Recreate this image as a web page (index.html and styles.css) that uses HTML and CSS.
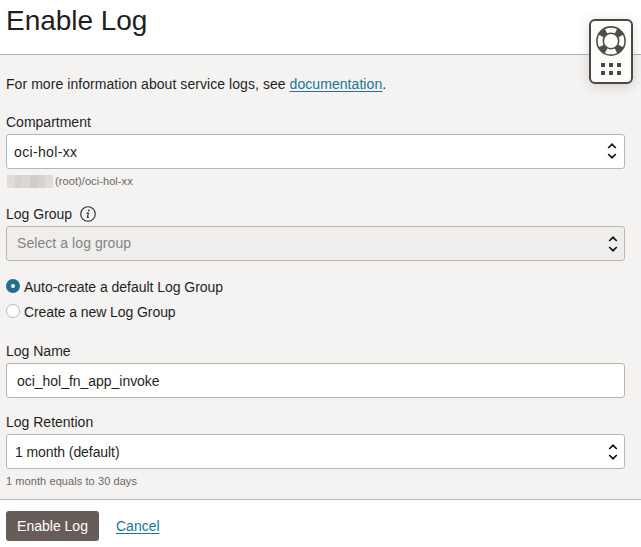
FILE: index.html
```html
<!DOCTYPE html>
<html lang="en">
<head>
<meta charset="utf-8">
<title>Enable Log</title>
<link rel="stylesheet" href="styles.css">
</head>
<body>
<div class="panel">
  <header class="header"><h1 class="title">Enable Log</h1></header>
  <main class="content">
    <p class="intro">For more information about service logs, see <a class="link" href="#">documentation</a>.</p>

    <section class="field">
      <div class="label">Compartment</div>
      <div class="control select first"><span class="compartment-value">oci-hol-xx</span>
        <svg class="chevrons" viewBox="0 0 10 16"><path d="M1.2 5 5 1.3 8.8 5M1.2 11 5 14.7 8.8 11"/></svg>
      </div>
      <div class="hint"><span class="redacted"><i class="r1"></i><i class="r2"></i><i class="r3"></i><i class="r4"></i><i class="r2"></i><i class="r1"></i></span><span>(root)/oci-hol-xx</span></div>
    </section>

    <section class="field group">
      <div class="label">Log Group
        <svg class="info" viewBox="0 0 16 16"><circle cx="8" cy="8" r="7.3"/><path class="dot" d="M8.1 3.7h1.7l-.4 1.6H7.7z"/><path d="M6.5 7.1h1.9l-1 4.3h1.5"/></svg>
      </div>
      <div class="control select disabled"><span>Select a log group</span>
        <svg class="chevrons" viewBox="0 0 10 16"><path d="M1.2 5 5 1.3 8.8 5M1.2 11 5 14.7 8.8 11"/></svg>
      </div>
    </section>

    <div class="radios">
      <div class="radio"><span class="knob on"></span><span>Auto-create a default Log Group</span></div>
      <div class="radio"><span class="knob"></span><span class="tight">Create a new Log Group</span></div>
    </div>

    <section class="field name">
      <div class="label">Log Name</div>
      <div class="control"><span class="name-value">oci_hol_fn_app_invoke</span></div>
    </section>

    <section class="field retention">
      <div class="label">Log Retention</div>
      <div class="control select month"><span class="tight">1 month (default)</span>
        <svg class="chevrons" viewBox="0 0 10 16"><path d="M1.2 5 5 1.3 8.8 5M1.2 11 5 14.7 8.8 11"/></svg>
      </div>
      <div class="hint">1 month equals to 30 days</div>
    </section>
  </main>
  <footer class="footer">
    <div class="button">Enable Log</div>
    <a class="link" href="#">Cancel</a>
  </footer>
</div>
<div class="help">
  <svg class="help-icon" viewBox="0 0 32 46">
    <circle class="blocks" cx="16" cy="16" r="11" pathLength="80"/>
    <circle class="line" cx="16" cy="16" r="14.1"/>
    <circle class="line" cx="16" cy="16" r="7.7"/>
    <path class="dots" d="M6 38h4v4H6zM14 38h4v4h-4zM22 38h4v4h-4zM6 46h4v4H6zM14 46h4v4h-4zM22 46h4v4h-4z"/>
  </svg>
</div>
</body>
</html>
```
FILE: styles.css
```css
* { box-sizing: border-box; }
body {
  margin: 0;
  background: #fff;
  color: #1f1f1f;
  font: 14px/20px "Liberation Sans", Arial, sans-serif;
  overflow: hidden;
}
.panel { height: 547px; display: flex; flex-direction: column; }
.header { height: 55px; padding: 5px 6px; border-bottom: 1px solid #b5b2ad; }
.title { margin: 0; font-size: 28px; line-height: 32px; font-weight: 400; letter-spacing: -.04px; }
.content { height: 445px; padding: 19px 16px 0 6px; background: #f4f3f2; border-bottom: 1px solid #b9b6b1; }
.intro { margin: 0 0 18px; letter-spacing: .06px; }
.link { color: #227396; text-decoration: underline; text-underline-offset: 2px; text-decoration-thickness: 1px; }
.label { display: flex; align-items: center; height: 20px; margin-bottom: 2px; }
.info { width: 16px; height: 16px; margin-left: 8px; fill: none; stroke: #2b2b2b; stroke-width: 1.1; }
.info .dot { fill: #2b2b2b; stroke: none; }
.control {
  display: flex;
  align-items: center;
  justify-content: space-between;
  height: 35px;
  padding: 1px 6px 0 10px;
  background: #fff;
  border: 1px solid #b9b2ab;
  border-radius: 3px;
}
.select { border-color: #afb6c5; }
.control.first { padding: 1px 7px 0 7px; }
.compartment-value { letter-spacing: .35px; }
.first .chevrons { margin-top: -3px; }
.control.month { padding-left: 8px; }
.tight { letter-spacing: -.08px; }
.name-value { letter-spacing: -.03px; }
.control.disabled { background: #efeeec; border-color: #bab5ae; color: #858482; padding-top: 0; letter-spacing: .07px; }
.disabled span { margin-top: -1px; }
.chevrons { width: 10px; height: 16px; fill: none; stroke: #161616; stroke-width: 1.7; }
.hint { display: flex; align-items: center; height: 16px; margin-top: 4px; color: #6b6664; font-size: 11px; line-height: 16px; letter-spacing: .08px; }
.redacted { display: flex; width: 46px; height: 13px; margin: 1px 2px 0 1px; }
.redacted i { flex: 1; }
.r1 { background: #dfdcda; }
.r2 { background: #d5d2d0; }
.r3 { background: #dad7d5; }
.r4 { background: #d0cecc; }
.group { margin-top: 15px; }
.radios { margin-top: 14px; }
.radio { display: flex; align-items: center; height: 25px; padding-bottom: 2px; letter-spacing: -.03px; }
.knob { width: 14px; height: 14px; margin: -1px 4px 0 0; border: 1px solid #b5bac5; border-radius: 50%; background: #fff; }
.knob.on { border: 5px solid #236d8e; }
.name { margin-top: 16px; }
.retention { margin-top: 14px; }
.footer { display: flex; align-items: center; height: 47px; padding: 5px 6px 0; gap: 17px; }
.button { display: flex; align-items: center; justify-content: center; width: 93px; height: 30px; background: #665d59; color: #fff; border-radius: 3px; }
.help {
  position: absolute;
  left: 589px;
  top: 19px;
  width: 44px;
  height: 65px;
  padding: 4px;
  background: #fdfdfc;
  border: 2px solid #4c4744;
  border-radius: 6px;
  box-shadow: 0 2px 12px rgba(60, 50, 40, .18);
}
.help-icon { display: block; width: 32px; height: 46px; overflow: visible; }
.blocks { fill: none; stroke: #514c48; stroke-width: 6.5; stroke-dasharray: 8 12; stroke-dashoffset: -6; }
.line { fill: none; stroke: #514c48; stroke-width: 1.6; }
.dots { fill: #4c4744; }
```
